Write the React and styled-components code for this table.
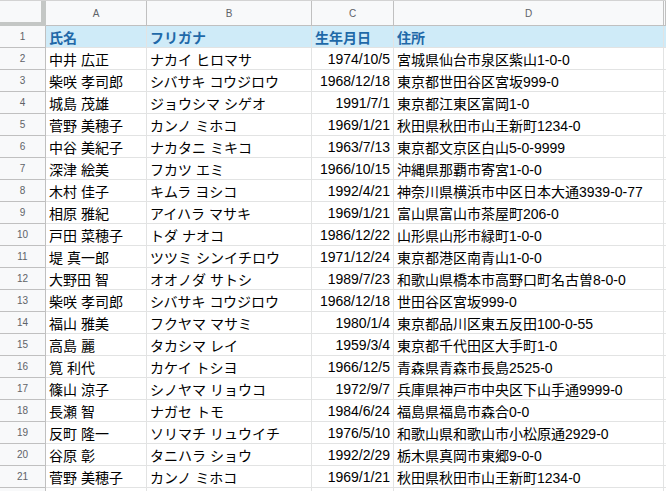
import styled, { createGlobalStyle } from 'styled-components';

const GlobalStyle = createGlobalStyle`
  html, body {
    margin: 0;
    padding: 0;
    background: #ffffff;
    overflow: hidden;
  }
  body {
    font-family: "Liberation Sans", "Noto Sans CJK JP", sans-serif;
  }
`;

const columns = [
  { key: 'A', width: 101 },
  { key: 'B', width: 165 },
  { key: 'C', width: 82, align: 'right' },
  { key: 'D', width: 270 },
];

const header = ['氏名', 'フリガナ', '生年月日', '住所'];

const rows = [
  ['中井 広正', 'ナカイ ヒロマサ', '1974/10/5', '宮城県仙台市泉区紫山1-0-0'],
  ['柴咲 孝司郎', 'シバサキ コウジロウ', '1968/12/18', '東京都世田谷区宮坂999-0'],
  ['城島 茂雄', 'ジョウシマ シゲオ', '1991/7/1', '東京都江東区富岡1-0'],
  ['菅野 美穂子', 'カンノ ミホコ', '1969/1/21', '秋田県秋田市山王新町1234-0'],
  ['中谷 美紀子', 'ナカタニ ミキコ', '1963/7/13', '東京都文京区白山5-0-9999'],
  ['深津 絵美', 'フカツ エミ', '1966/10/15', '沖縄県那覇市寄宮1-0-0'],
  ['木村 佳子', 'キムラ ヨシコ', '1992/4/21', '神奈川県横浜市中区日本大通3939-0-77'],
  ['相原 雅紀', 'アイハラ マサキ', '1969/1/21', '富山県富山市茶屋町206-0'],
  ['戸田 菜穂子', 'トダ ナオコ', '1986/12/22', '山形県山形市緑町1-0-0'],
  ['堤 真一郎', 'ツツミ シンイチロウ', '1971/12/24', '東京都港区南青山1-0-0'],
  ['大野田 智', 'オオノダ サトシ', '1989/7/23', '和歌山県橋本市高野口町名古曽8-0-0'],
  ['柴咲 孝司郎', 'シバサキ コウジロウ', '1968/12/18', '世田谷区宮坂999-0'],
  ['福山 雅美', 'フクヤマ マサミ', '1980/1/4', '東京都品川区東五反田100-0-55'],
  ['高島 麗', 'タカシマ レイ', '1959/3/4', '東京都千代田区大手町1-0'],
  ['筧 利代', 'カケイ トシヨ', '1966/12/5', '青森県青森市長島2525-0'],
  ['篠山 涼子', 'シノヤマ リョウコ', '1972/9/7', '兵庫県神戸市中央区下山手通9999-0'],
  ['長瀬 智', 'ナガセ トモ', '1984/6/24', '福島県福島市森合0-0'],
  ['反町 隆一', 'ソリマチ リュウイチ', '1976/5/10', '和歌山県和歌山市小松原通2929-0'],
  ['谷原 彰', 'タニハラ ショウ', '1992/2/29', '栃木県真岡市東郷9-0-0'],
  ['菅野 美穂子', 'カンノ ミホコ', '1969/1/21', '秋田県秋田市山王新町1234-0'],
];

export default function App() {
  return (
    <>
      <GlobalStyle />
      <Sheet>
        <HeaderRow>
          <Corner />
          {columns.map((c) => (
            <ColHead key={c.key} $w={c.width}>
              {c.key}
            </ColHead>
          ))}
          <ColHead $fill />
        </HeaderRow>

        <Row>
          <RowHead>1</RowHead>
          {header.map((h, i) => (
            <Cell key={h} $w={columns[i].width} $title>
              {h}
            </Cell>
          ))}
          <Cell $fill $title />
        </Row>

        {rows.map((r, n) => (
          <Row key={n}>
            <RowHead>{n + 2}</RowHead>
            {r.map((v, i) => (
              <Cell key={i} $w={columns[i].width} $align={columns[i].align}>
                {v}
              </Cell>
            ))}
            <Cell $fill />
          </Row>
        ))}

        <Row>
          <RowHead />
          {columns.map((c) => (
            <Cell key={c.key} $w={c.width} />
          ))}
          <Cell $fill />
        </Row>
      </Sheet>
    </>
  );
}

const Sheet = styled.div`
  display: flex;
  flex-direction: column;
  width: 666px;
  height: 491px;
  overflow: hidden;
  background: #fff;
`;

const HeaderRow = styled.div`
  display: flex;
  height: 26px;
  flex-shrink: 0;
  background: #f8f9fa;
  border-top: 1px solid #d3d3d3;
  box-sizing: border-box;
`;

const Corner = styled.div`
  width: 46px;
  flex-shrink: 0;
  box-sizing: border-box;
  background: #f8f9fa;
  border-right: 5px solid #c4c7c5;
  border-bottom: 4px solid #c4c7c5;
`;

const ColHead = styled.div`
  width: ${(p) => (p.$w ? `${p.$w}px` : 'auto')};
  flex: ${(p) => (p.$fill ? '1' : '0 0 auto')};
  box-sizing: border-box;
  border-right: 1px solid #c0c0c0;
  border-bottom: 1px solid #c0c0c0;
  display: flex;
  align-items: center;
  justify-content: center;
  font-size: 10px;
  color: #5f6368;
  padding-top: 1px;
`;

const Row = styled.div`
  display: flex;
  height: 22px;
  flex-shrink: 0;
`;

const RowHead = styled.div`
  width: 46px;
  flex-shrink: 0;
  box-sizing: border-box;
  background: #f8f9fa;
  border-right: 1px solid #c0c0c0;
  border-bottom: 1px solid #c0c0c0;
  display: flex;
  align-items: center;
  justify-content: center;
  font-size: 10px;
  color: #5f6368;
`;

const Cell = styled.div`
  width: ${(p) => (p.$w ? `${p.$w}px` : 'auto')};
  flex: ${(p) => (p.$fill ? '1' : '0 0 auto')};
  box-sizing: border-box;
  border-right: 1px solid #e2e3e3;
  border-bottom: 1px solid #e2e3e3;
  background: ${(p) => (p.$title ? '#cfebf8' : '#fff')};
  color: ${(p) => (p.$title ? '#1f69a8' : '#000')};
  font-weight: ${(p) => (p.$title ? 700 : 400)};
  font-size: 14px;
  display: flex;
  align-items: center;
  justify-content: ${(p) => (p.$align === 'right' ? 'flex-end' : 'flex-start')};
  padding: 0 3px;
  white-space: nowrap;
  overflow: hidden;
`;
